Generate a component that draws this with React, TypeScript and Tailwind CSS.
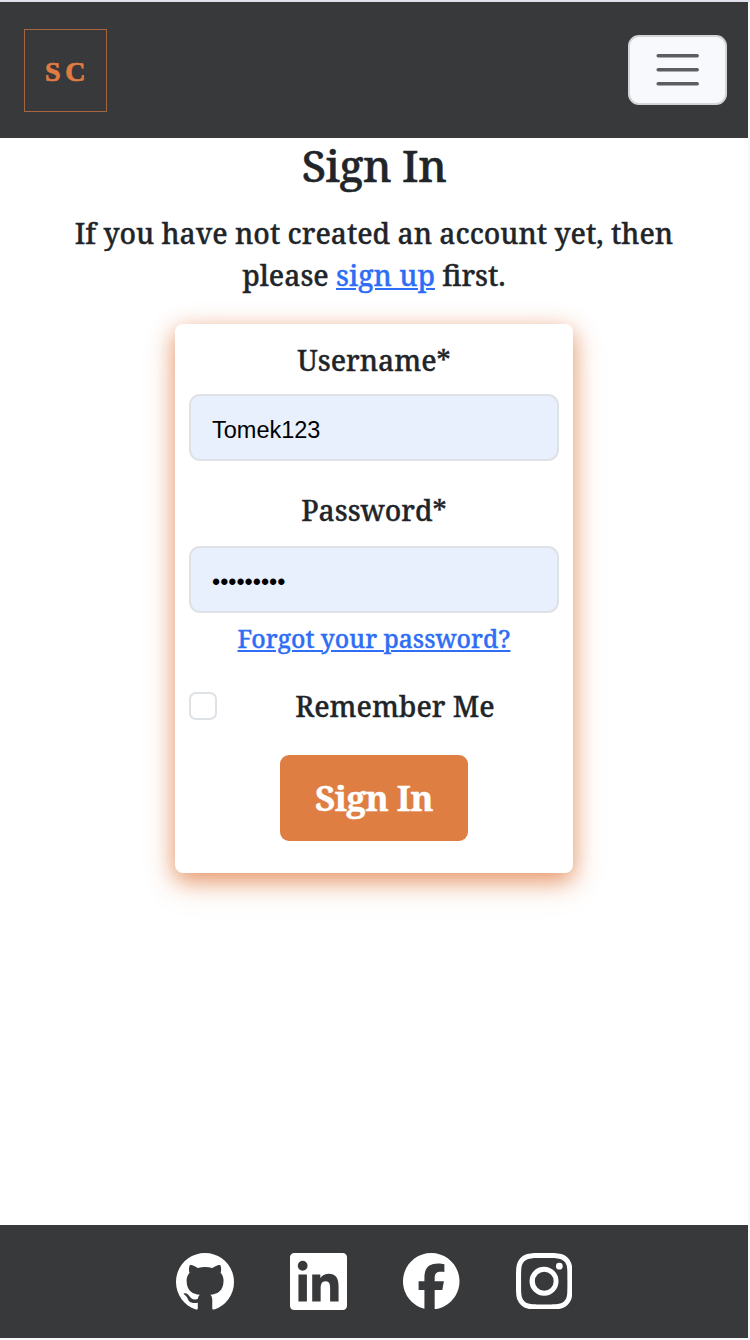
import { BsGithub, BsInstagram } from "react-icons/bs";
import { FaFacebook } from "react-icons/fa6";

function LinkedIn({ className }: { className?: string }) {
  return (
    <svg viewBox="0 0 24 24" fill="currentColor" className={className}>
      <path d="M20.447 20.452h-3.554v-5.569c0-1.328-.027-3.037-1.852-3.037-1.853 0-2.136 1.445-2.136 2.939v5.667H9.351V9h3.414v1.561h.046c.477-.9 1.637-1.85 3.37-1.85 3.601 0 4.267 2.37 4.267 5.455v6.286zM5.337 7.433a2.062 2.062 0 01-2.063-2.065 2.064 2.064 0 112.063 2.065zm1.782 13.019H3.555V9h3.564v11.452zM22.225 0H1.771C.792 0 0 .774 0 1.729v20.542C0 23.227.792 24 1.771 24h20.451C23.2 24 24 23.227 24 22.271V1.729C24 .774 23.2 0 22.222 0h.003z" />
    </svg>
  );
}

const links = [
  { name: "GitHub", Icon: BsGithub, size: "size-[58px] mt-px" },
  { name: "LinkedIn", Icon: LinkedIn, size: "size-[57px]" },
  { name: "Facebook", Icon: FaFacebook, size: "size-[56.5px]" },
  { name: "Instagram", Icon: BsInstagram, size: "size-[56.5px]" },
];

function Header() {
  return (
    <header className="flex h-[136px] items-center justify-between bg-[#38393b] pl-[23.5px] pr-[21px]">
      <a
        href="#"
        className="mt-[2px] flex h-[83px] w-[83px] items-center justify-center border border-[#a5653f] font-['Liberation_Serif',serif] text-[28px] font-bold leading-none text-[#e07c42] [-webkit-text-stroke:0.7px_#e07c42]"
      >
        <span className="pl-[5px] pt-[3px] tracking-[4.5px]">SC</span>
      </a>
      <button
        type="button"
        aria-label="Menu"
        className="flex h-[70px] w-[99px] items-center justify-center rounded-[11px] border-2 border-[#d4d5d7] bg-[#f8f9fc]"
      >
        <svg width="44" height="34" viewBox="0 0 44 34" stroke="#5c5d60" strokeWidth="3.5" strokeLinecap="round">
          <path d="M2.2 2.7h39M2.2 16.7h39M2.2 30.7h39" />
        </svg>
      </button>
    </header>
  );
}

function Footer() {
  return (
    <footer className="flex h-[113px] items-center justify-center gap-[56px] bg-[#38393b] text-white">
      {links.map(({ name, Icon, size }) => (
        <a key={name} href="#" aria-label={name}>
          <Icon className={size} />
        </a>
      ))}
    </footer>
  );
}

export default function App() {
  return (
    <div className="h-[1340px] w-[750px] bg-[#f8f9fc] font-['Noto_Serif','DejaVu_Serif_Condensed','DejaVu_Serif',serif] text-[28.2px] font-medium text-[#212529]">
      <div className="h-[1.5px] bg-[#dfe2ec]" />
      <div className="flex h-[1336px] w-[748px] flex-col bg-white">
        <Header />
        <main className="flex flex-1 flex-col items-center text-center">
          <h1 className="mt-[1px] h-[53px] text-[44px] leading-[53px] tracking-[-0.5px] [-webkit-text-stroke:0.5px_#212529]">Sign In</h1>
          <p className="mt-[20px] leading-[42px] whitespace-nowrap [-webkit-text-stroke:0.35px]">
            If you have not created an account yet, then
            <br />
            please <a href="#" className="text-[#2e6df6] underline">sign up</a> first.
          </p>
          <form className="mt-[28px] flex h-[549px] w-[398px] flex-col items-center rounded-[8px] bg-white px-[14px] shadow-[0_7px_22px_#e07c42c0,0_10.5px_35px_#e07c4233]">
            <label htmlFor="username" className="mt-[15px] leading-[42px] [-webkit-text-stroke:0.35px]">Username*</label>
            <input
              id="username"
              defaultValue="Tomek123"
              className="mt-[13px] h-[67px] w-full rounded-[11px] border-2 border-[#dee2e6] bg-[#e8effd] px-[21px] pt-[7px] font-['Liberation_Sans',sans-serif] text-[23.5px] font-normal text-black"
            />
            <label htmlFor="password" className="mt-[28px] leading-[42px] [-webkit-text-stroke:0.35px]">Password*</label>
            <input
              id="password"
              type="password"
              defaultValue="abcdefghi"
              className="mt-[15px] h-[67px] w-full rounded-[11px] border-2 border-[#dee2e6] bg-[#e8effd] px-[21px] pt-[7px] font-['Liberation_Sans',sans-serif] text-[23.3px] font-normal text-black"
            />
            <a href="#" className="mt-[7px] text-[24.6px] leading-[37px] text-[#2e6df6] underline [-webkit-text-stroke:0.35px]">Forgot your password?</a>
            <div className="mt-[28px] flex h-[42px] w-full items-center">
              <input id="remember" type="checkbox" className="size-[28px] appearance-none rounded-[7px] border-2 border-[#dee2e6] bg-white" />
              <label htmlFor="remember" className="flex-1 pl-[14px] pt-[2px] [-webkit-text-stroke:0.35px]">Remember Me</label>
            </div>
            <button type="button" className="mt-[28px] h-[86px] w-[188px] rounded-[9px] bg-[#df7e43] pt-[2px] text-[35px] font-bold tracking-[-0.6px] text-white [-webkit-text-stroke:0.4px]">
              Sign In
            </button>
          </form>
        </main>
        <Footer />
      </div>
    </div>
  );
}
